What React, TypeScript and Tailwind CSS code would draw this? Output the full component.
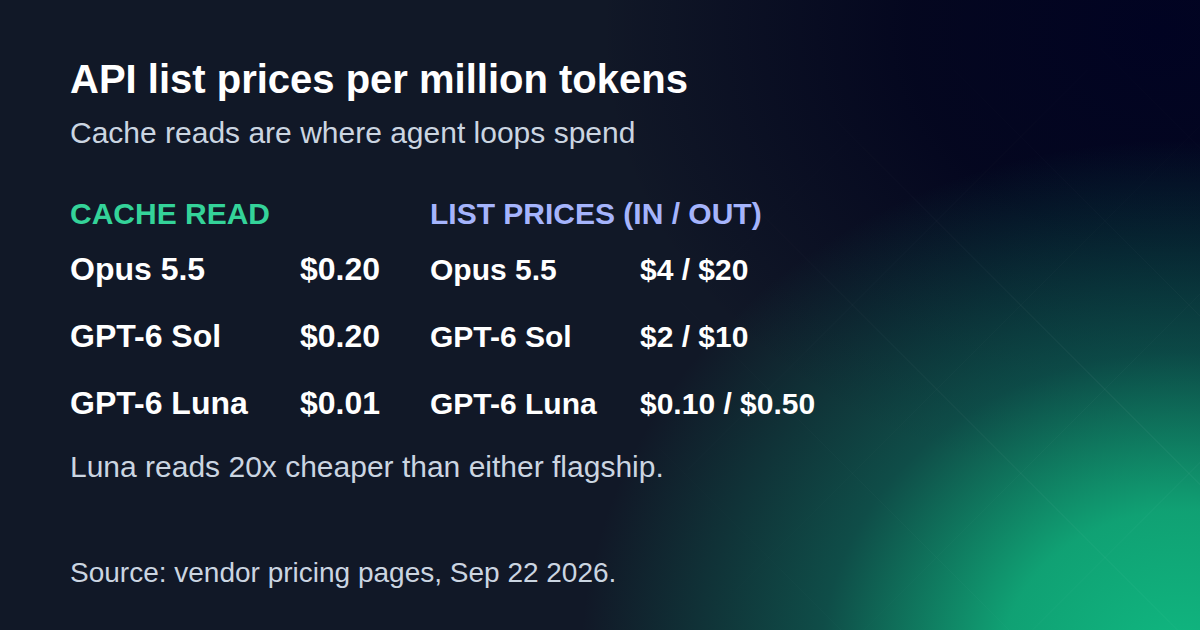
import React from "react";

interface PriceRow {
  model: string;
  cacheRead: string;
  list: string;
}

const rows: PriceRow[] = [
  { model: "Opus 5.5", cacheRead: "$0.20", list: "$4 / $20" },
  { model: "GPT-6 Sol", cacheRead: "$0.20", list: "$2 / $10" },
  { model: "GPT-6 Luna", cacheRead: "$0.01", list: "$0.10 / $0.50" },
];

export default function App() {
  return (
    <div
      className="relative w-[1200px] h-[630px] overflow-hidden bg-[#111827] font-['Liberation_Sans',Arial,sans-serif] bg-[radial-gradient(ellipse_600px_530px_at_1180px_670px,#10b981_0%,rgba(16,185,129,0.85)_30%,rgba(13,130,105,0.5)_60%,rgba(17,24,39,0)_100%),radial-gradient(ellipse_560px_460px_at_1160px_30px,#010322_0%,rgba(2,4,30,0.85)_45%,rgba(17,24,39,0)_100%)]"
    >
      {/* faint diagonal grid on the right side */}
      <div className="pointer-events-none absolute inset-0 opacity-70 bg-[repeating-linear-gradient(45deg,transparent_0px,transparent_118px,rgba(255,255,255,0.05)_118px,rgba(255,255,255,0.05)_119px),repeating-linear-gradient(-45deg,transparent_0px,transparent_118px,rgba(255,255,255,0.035)_118px,rgba(255,255,255,0.035)_119px)] [mask-image:radial-gradient(ellipse_500px_420px_at_1100px_420px,black_0%,transparent_100%)]" />

      <div className="relative flex flex-col px-[70px] pt-[55px]">
        <h1 className="text-[40px] leading-[48px] font-bold text-white">
          API list prices per million tokens
        </h1>
        <p className="mt-[12px] text-[30px] leading-[36px] text-[#cbd5e1]">
          Cache reads are where agent loops spend
        </p>

        <div className="mt-[45px] grid grid-cols-[230px_130px_210px_auto] gap-y-[30px] items-baseline">
          <div className="col-span-2 -mb-[11px] text-[30px] leading-[36px] font-bold text-[#34d399]">
            CACHE READ
          </div>
          <div className="col-span-2 -mb-[11px] text-[30px] leading-[36px] font-bold text-[#a5b4fc]">
            LIST PRICES (IN / OUT)
          </div>

          {rows.map((row) => (
            <React.Fragment key={row.model}>
              <div className="text-[32px] leading-[36px] font-bold text-white">{row.model}</div>
              <div className="text-[32px] leading-[36px] font-bold text-white">{row.cacheRead}</div>
              <div className="text-[30px] leading-[36px] font-bold text-white">{row.model}</div>
              <div className="text-[30px] leading-[36px] font-bold text-white">{row.list}</div>
            </React.Fragment>
          ))}
        </div>

        <p className="mt-[27px] text-[30px] leading-[36px] text-[#cbd5e1]">
          Luna reads 20x cheaper than either flagship.
        </p>
        <p className="mt-[71px] text-[28px] leading-[34px] text-[#cbd5e1]">
          Source: vendor pricing pages, Sep 22 2026.
        </p>
      </div>
    </div>
  );
}
